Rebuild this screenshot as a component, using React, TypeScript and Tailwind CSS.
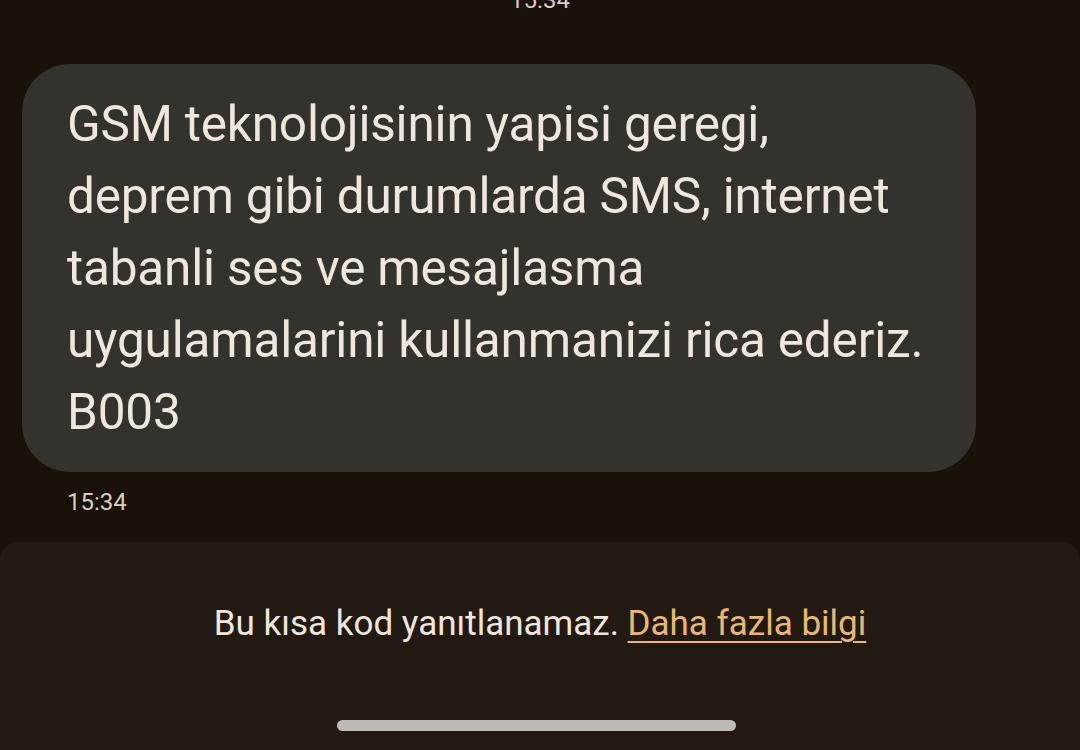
import React from 'react';

const font = { fontFamily: 'Roboto, "Noto Sans", sans-serif' };

export default function App() {
  return (
    <div className="w-[1080px] h-[750px] bg-[#1a1108] overflow-hidden flex flex-col" style={font}>
      {/* top timestamp, scrolled half out of view */}
      <div className="h-[16px] shrink-0 flex justify-center items-end">
        <span className="text-[24px] leading-[28px] text-[#d8cfc4] mb-[2px]">15:34</span>
      </div>

      {/* message bubble */}
      <div className="mt-[48px] ml-[22px] w-[954px] shrink-0 rounded-[48px] bg-[#34322c] px-[45px] py-[24px]">
        <p className="text-[49.5px] leading-[72px] text-[#efe6de] whitespace-nowrap tracking-[-0.2px]">
          GSM teknolojisinin yapisi geregi,
          <br />
          deprem gibi durumlarda SMS, internet
          <br />
          tabanli ses ve mesajlasma
          <br />
          uygulamalarini kullanmanizi rica ederiz.
          <br />
          B003
        </p>
      </div>

      <div className="ml-[67px] mt-[16px] shrink-0 text-[24px] leading-[28px] text-[#d8cfc4]">15:34</div>

      {/* footer */}
      <div className="mt-auto h-[208px] shrink-0 rounded-t-[18px] bg-[#221a12] flex flex-col items-center">
        <p className="mt-[61px] text-[35px] leading-[42px] text-[#efe6de] whitespace-nowrap">
          Bu kısa kod yanıtlanamaz.{' '}
          <span className="text-[#e8b874] underline underline-offset-[6px] decoration-[2px]">Daha fazla bilgi</span>
        </p>
        <div className="mt-auto mb-[19px] mr-[8px] w-[399px] h-[11px] rounded-full bg-[#bdbab5]" />
      </div>
    </div>
  );
}
